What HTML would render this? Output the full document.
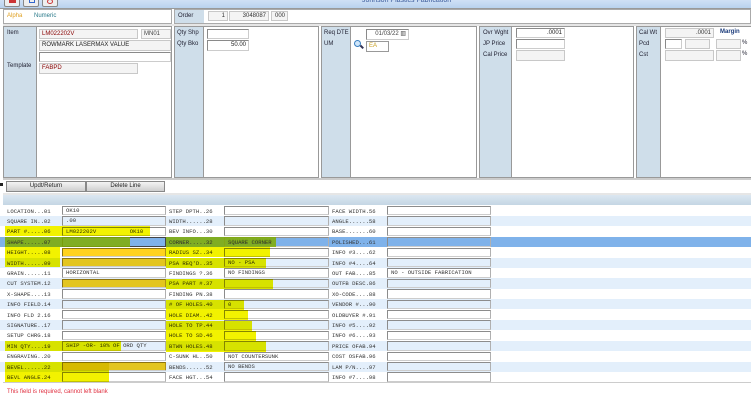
<!DOCTYPE html>
<html><head><meta charset="utf-8"><style>
*{margin:0;padding:0;box-sizing:border-box}
body{width:751px;height:400px;overflow:hidden;background:#fff;position:relative;font-family:"Liberation Sans",sans-serif;font-size:6px;color:#333}
.a{position:absolute}
.blue{background:#cfdeea}
.fld{position:absolute;border:1px solid #c8c8c8;background:#f4f4f4;font-size:6px;line-height:8px;padding:0 2px;color:#800}
.ifld{position:absolute;border:1px solid #8a8a8a;border-right-color:#ccc;border-bottom-color:#ccc;background:#fff;font-size:6px;line-height:8px;padding:0 2px;color:#222}
.lbl{position:absolute;font-size:6px;color:#223;}
.row{position:absolute;left:0;width:751px;height:10.4px;font-family:"Liberation Mono",monospace;font-size:5.6px;color:#333}
.row.alt{background:#e3effb}
.row.sel{background:#7fb2ea}
.row span{position:absolute;top:2px}
.row i{position:absolute;top:0.5px;height:9.4px;border:1px solid #8c8c8c;border-right-color:#b0b0b0;border-bottom-color:#ccc;font-style:normal;padding-left:3px;line-height:8px}
.c1{left:62px;width:104px}.c2{left:224px;width:105px}.c3{left:387px;width:104px}
.y{position:absolute;background:#f2f200;mix-blend-mode:multiply}
.o{position:absolute;background:#ffd21f;mix-blend-mode:multiply}
.g{position:absolute;background:rgba(128,172,0,0.85)}
.btn{position:absolute;top:181px;height:11px;border:1px solid #888;background:linear-gradient(#f4f4f4,#cfcfcf);font-size:6px;text-align:center;line-height:9px;color:#222}
</style></head><body>
<div class="a" style="left:0;top:0;width:751px;height:8px;background:linear-gradient(#cfe0f5,#b9d2ee)"></div>
<div class="a" style="left:4px;top:-3px;width:16px;height:10px;border:1px solid #888;background:#eee;border-radius:2px"><div class="a" style="left:4px;top:2px;width:7px;height:3px;background:#c33"></div></div>
<div class="a" style="left:23px;top:-3px;width:16px;height:10px;border:1px solid #888;background:#eee;border-radius:2px"><div class="a" style="left:5px;top:1px;width:6px;height:4px;border:1px solid #36c"></div></div>
<div class="a" style="left:42px;top:-3px;width:16px;height:10px;border:1px solid #888;background:#eee;border-radius:2px"><div class="a" style="left:4px;top:1px;width:6px;height:5px;border-radius:50%;border:1.5px solid #c33"></div></div>
<div class="a" style="left:362px;top:-3px;font-size:7px;color:#3a5a9a">Johnson Plastics Fabrication</div>
<div class="a" style="left:0;top:8px;width:751px;height:1px;background:#999"></div>
<div class="a" style="left:0;top:183px;width:3px;height:3px;background:#222"></div>
<!-- row1 -->
<div class="a" style="left:3px;top:9px;width:169px;height:15px;border:1px solid #aaa;background:#fff"></div>
<div class="lbl" style="left:7px;top:13px;color:#e0a020">Alpha</div>
<div class="lbl" style="left:34px;top:13px;color:#2a7a8a">Numeric</div>
<div class="a" style="left:174px;top:9px;width:577px;height:15px;border:1px solid #aaa;background:#fff"></div>
<div class="a blue" style="left:175px;top:10px;width:29px;height:13px"></div>
<div class="lbl" style="left:178px;top:13px">Order</div>
<div class="fld" style="left:208px;top:11px;width:20px;height:10px;text-align:right;color:#333">1</div>
<div class="fld" style="left:229px;top:11px;width:40px;height:10px;text-align:right;color:#333">3048087</div>
<div class="fld" style="left:271px;top:11px;width:17px;height:10px;text-align:right;color:#333">000</div>
<div class="a" style="left:3px;top:24px;width:748px;height:2px;background:#e6e6e6"></div>
<!-- main panels -->
<div class="a" style="left:3px;top:26px;width:169px;height:152px;border:1px solid #999;background:#fff"></div>
<div class="a blue" style="left:4px;top:27px;width:33px;height:150px;border-right:1px solid #999"></div>
<div class="lbl" style="left:7px;top:30px">Item</div>
<div class="lbl" style="left:7px;top:63px">Template</div>
<div class="fld" style="left:39px;top:29px;width:99px;height:10px">LM022202V</div>
<div class="fld" style="left:141px;top:29px;width:30px;height:10px;color:#444">MN01</div>
<div class="fld" style="left:39px;top:40px;width:132px;height:11px;color:#222">ROWMARK LASERMAX VALUE</div>
<div class="ifld" style="left:39px;top:52px;width:132px;height:10px"></div>
<div class="fld" style="left:39px;top:63px;width:99px;height:11px">FABPD</div>

<div class="a" style="left:174px;top:26px;width:145px;height:152px;border:1px solid #999;background:#fff"></div>
<div class="a blue" style="left:175px;top:27px;width:29px;height:150px;border-right:1px solid #999"></div>
<div class="lbl" style="left:177px;top:30px">Qty Shp</div>
<div class="lbl" style="left:177px;top:41px">Qty Bko</div>
<div class="ifld" style="left:207px;top:29px;width:42px;height:10px"></div>
<div class="ifld" style="left:207px;top:40px;width:42px;height:11px;text-align:right">50.00</div>

<div class="a" style="left:321px;top:26px;width:156px;height:152px;border:1px solid #999;background:#fff"></div>
<div class="a blue" style="left:322px;top:27px;width:29px;height:150px;border-right:1px solid #999"></div>
<div class="lbl" style="left:324px;top:30px">Req DTE</div>
<div class="lbl" style="left:324px;top:41px">UM</div>
<div class="ifld" style="left:366px;top:29px;width:43px;height:11px;text-align:right;color:#444">01/03/22 ▥</div>
<div class="a" style="left:354px;top:40px;width:7px;height:7px;border-radius:50%;border:1.5px solid #3a7fc0;background:#cfe6fa"></div>
<div class="a" style="left:360px;top:46px;width:4px;height:1.5px;background:#335;transform:rotate(45deg)"></div>
<div class="fld" style="left:366px;top:41px;width:23px;height:11px;background:#fff;color:#c9a020;border-color:#999">EA</div>

<div class="a" style="left:479px;top:26px;width:155px;height:152px;border:1px solid #999;background:#fff"></div>
<div class="a blue" style="left:480px;top:27px;width:32px;height:150px;border-right:1px solid #999"></div>
<div class="lbl" style="left:483px;top:30px">Ovr Wght</div>
<div class="lbl" style="left:483px;top:41px">JP Price</div>
<div class="lbl" style="left:483px;top:52px">Cal Price</div>
<div class="ifld" style="left:516px;top:28px;width:49px;height:10px;text-align:right">.0001</div>
<div class="ifld" style="left:516px;top:39px;width:49px;height:10px"></div>
<div class="fld" style="left:516px;top:50px;width:49px;height:11px"></div>

<div class="a" style="left:636px;top:26px;width:115px;height:152px;border:1px solid #999;border-right:none;background:#fff"></div>
<div class="a blue" style="left:637px;top:27px;width:24px;height:150px;border-right:1px solid #999"></div>
<div class="lbl" style="left:639px;top:30px">Cal Wt</div>
<div class="lbl" style="left:639px;top:41px">Pcd</div>
<div class="lbl" style="left:639px;top:52px">Cst</div>
<div class="fld" style="left:665px;top:28px;width:49px;height:10px;text-align:right;color:#333">.0001</div>
<div class="lbl" style="left:720px;top:29px;color:#1a3a7a;font-weight:bold">Margin</div>
<div class="ifld" style="left:665px;top:39px;width:17px;height:10px"></div>
<div class="fld" style="left:685px;top:39px;width:25px;height:10px"></div>
<div class="fld" style="left:716px;top:39px;width:25px;height:10px"></div>
<div class="lbl" style="left:742px;top:40px">%</div>
<div class="fld" style="left:665px;top:50px;width:49px;height:11px"></div>
<div class="fld" style="left:716px;top:50px;width:25px;height:11px"></div>
<div class="lbl" style="left:742px;top:51px">%</div>

<div class="a" style="left:3px;top:178px;width:748px;height:2px;background:#ccc"></div>
<div class="btn" style="left:6px;width:80px">Updt/Return</div>
<div class="btn" style="left:86px;width:79px">Delete Line</div>
<div class="a" style="left:3px;top:193px;width:748px;height:2px;background:#e6e6e6"></div>
<div class="a" style="left:3px;top:195px;width:748px;height:10px;background:linear-gradient(#dbe7f1,#c4d6e4)"></div>

<!-- grid -->
<div class="row" style="top:205.5px"><span style="left:7px">LOCATION...01</span><i class="c1">OK10</i><span style="left:169px">STEP DPTH..26</span><i class="c2"></i><span style="left:332px">FACE WIDTH.56</span><i class="c3"></i></div>
<div class="row alt" style="top:215.9px"><span style="left:7px">SQUARE IN..02</span><i class="c1">.00</i><span style="left:169px">WIDTH......28</span><i class="c2"></i><span style="left:332px">ANGLE......58</span><i class="c3"></i></div>
<div class="row" style="top:226.3px"><span style="left:7px">PART #.....06</span><i class="c1">LM022202V&nbsp;&nbsp;&nbsp;&nbsp;&nbsp;&nbsp;&nbsp;&nbsp;&nbsp;&nbsp;OK10</i><span style="left:169px">BEV INFO...30</span><i class="c2"></i><span style="left:332px">BASE.......60</span><i class="c3"></i></div>
<div class="row sel" style="top:236.7px"><span style="left:7px">SHAPE......07</span><i class="c1" style="border-color:#444"></i><span style="left:169px">CORNER.....32</span><i class="c2">SQUARE CORNER</i><span style="left:332px">POLISHED...61</span><i class="c3"></i></div>
<div class="row" style="top:247.1px"><span style="left:7px">HEIGHT.....08</span><i class="c1"></i><span style="left:169px">RADIUS SZ..34</span><i class="c2"></i><span style="left:332px">INFO #3....62</span><i class="c3"></i></div>
<div class="row alt" style="top:257.5px"><span style="left:7px">WIDTH......09</span><i class="c1"></i><span style="left:169px">PSA REQ'D..35</span><i class="c2">NO - PSA</i><span style="left:332px">INFO #4....64</span><i class="c3"></i></div>
<div class="row" style="top:267.9px"><span style="left:7px">GRAIN......11</span><i class="c1">HORIZONTAL</i><span style="left:169px">FINDINGS ?.36</span><i class="c2">NO FINDINGS</i><span style="left:332px">OUT FAB....85</span><i class="c3">NO - OUTSIDE FABRICATION</i></div>
<div class="row alt" style="top:278.3px"><span style="left:7px">CUT SYSTEM.12</span><i class="c1"></i><span style="left:169px">PSA PART #.37</span><i class="c2"></i><span style="left:332px">OUTFB DESC.86</span><i class="c3"></i></div>
<div class="row" style="top:288.7px"><span style="left:7px">X-SHAPE....13</span><i class="c1"></i><span style="left:169px">FINDING PN.38</span><i class="c2"></i><span style="left:332px">XO-CODE....88</span><i class="c3"></i></div>
<div class="row alt" style="top:299.1px"><span style="left:7px">INFO FIELD.14</span><i class="c1"></i><span style="left:169px"># OF HOLES.40</span><i class="c2">0</i><span style="left:332px">VENDOR #...90</span><i class="c3"></i></div>
<div class="row" style="top:309.5px"><span style="left:7px">INFO FLD 2.16</span><i class="c1"></i><span style="left:169px">HOLE DIAM..42</span><i class="c2"></i><span style="left:332px">OLDBUYER #.91</span><i class="c3"></i></div>
<div class="row alt" style="top:319.9px"><span style="left:7px">SIGNATURE..17</span><i class="c1"></i><span style="left:169px">HOLE TO TP.44</span><i class="c2"></i><span style="left:332px">INFO #5....92</span><i class="c3"></i></div>
<div class="row" style="top:330.3px"><span style="left:7px">SETUP CHRG.18</span><i class="c1"></i><span style="left:169px">HOLE TO SD.46</span><i class="c2"></i><span style="left:332px">INFO #6....93</span><i class="c3"></i></div>
<div class="row alt" style="top:340.7px"><span style="left:7px">MIN QTY....19</span><i class="c1">SHIP -OR- 10% OF ORD QTY</i><span style="left:169px">BTWN HOLES.48</span><i class="c2"></i><span style="left:332px">PRICE OFAB.94</span><i class="c3"></i></div>
<div class="row" style="top:351.1px"><span style="left:7px">ENGRAVING..20</span><i class="c1"></i><span style="left:169px">C-SUNK HL..50</span><i class="c2">NOT COUNTERSUNK</i><span style="left:332px">COST OSFAB.96</span><i class="c3"></i></div>
<div class="row alt" style="top:361.5px"><span style="left:7px">BEVEL......22</span><i class="c1"></i><span style="left:169px">BENDS......52</span><i class="c2">NO BENDS</i><span style="left:332px">LAM P/N....97</span><i class="c3"></i></div>
<div class="row" style="top:371.9px"><span style="left:7px">BEVL ANGLE.24</span><i class="c1"></i><span style="left:169px">FACE HGT...54</span><i class="c2"></i><span style="left:332px">INFO #7....98</span><i class="c3"></i></div>

<!-- highlights -->
<div class="y" style="left:5px;top:226px;width:145px;height:10px"></div>
<div class="g" style="left:5px;top:237px;width:125px;height:10px"></div>
<div class="y" style="left:5px;top:247px;width:55px;height:20px"></div>
<div class="o" style="left:62px;top:248px;width:104px;height:8px"></div>
<div class="o" style="left:62px;top:258px;width:104px;height:8px"></div>
<div class="o" style="left:62px;top:279px;width:104px;height:8px"></div>
<div class="y" style="left:5px;top:341px;width:116px;height:10px"></div>
<div class="y" style="left:5px;top:362px;width:104px;height:20px"></div>
<div class="o" style="left:62px;top:362px;width:104px;height:8px"></div>
<div class="g" style="left:166px;top:237px;width:110px;height:10px"></div>
<div class="y" style="left:166px;top:247px;width:104px;height:10px"></div>
<div class="y" style="left:166px;top:258px;width:100px;height:10px"></div>
<div class="y" style="left:166px;top:279px;width:107px;height:10px"></div>
<div class="y" style="left:166px;top:300px;width:78px;height:10px"></div>
<div class="y" style="left:166px;top:310px;width:82px;height:10px"></div>
<div class="y" style="left:166px;top:321px;width:86px;height:10px"></div>
<div class="y" style="left:166px;top:331px;width:90px;height:10px"></div>
<div class="y" style="left:166px;top:341px;width:100px;height:11px"></div>
<div class="a" style="left:7px;top:239px;font-family:'Liberation Mono',monospace;font-size:5.6px;color:#333">SHAPE......07</div>
<div class="a" style="left:169px;top:239px;font-family:'Liberation Mono',monospace;font-size:5.6px;color:#333">CORNER.....32</div>
<div class="a" style="left:228px;top:238.5px;font-family:'Liberation Mono',monospace;font-size:5.6px;color:#333">SQUARE CORNER</div>

<div class="a" style="left:3px;top:382px;width:748px;height:1px;background:#ccc"></div>
<div class="a" style="left:7px;top:389px;font-size:6px;color:#e03040">This field is required, cannot left blank</div>
</body></html>
